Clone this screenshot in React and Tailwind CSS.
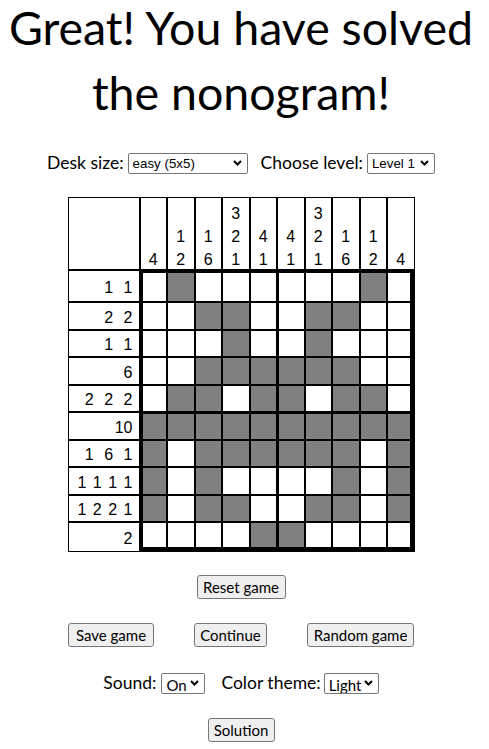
import React, { useState } from 'react';

const colClues = [[4], [1, 2], [1, 6], [3, 2, 1], [4, 1], [4, 1], [3, 2, 1], [1, 6], [1, 2], [4]];
const rowClues = [[1, 1], [2, 2], [1, 1], [6], [2, 2, 2], [10], [1, 6, 1], [1, 1, 1, 1], [1, 2, 2, 1], [2]];
const solved = [
  '0100000010',
  '0011001100',
  '0001001000',
  '0011111100',
  '0110110110',
  '1111111111',
  '1011111101',
  '1010000101',
  '1011001101',
  '0000110000',
];

const font = { fontFamily: 'Lato, "Open Sans", sans-serif' };

// border widths of a game cell: thick frame and a thick cross in the middle
const cellBorder = (r, c) => {
  const left = c === 0 ? 'border-l-[3px]' : c === 5 ? 'border-l-[2px]' : 'border-l-[1px]';
  const right = c === 9 ? 'border-r-[5px]' : 'border-r-[1px]';
  const top = r === 0 ? 'border-t-[3px]' : r === 5 ? 'border-t-[2px]' : 'border-t-[1px]';
  const bottom = r === 9 ? 'border-b-[5px]' : 'border-b-[1px]';
  return `${left} ${right} ${top} ${bottom}`;
};

const Select = ({ value, options, width, small, onChange }) => (
  <span className={`relative inline-flex ${width}`}>
    <select
      value={value}
      onChange={(e) => onChange(e.target.value)}
      className={`appearance-none w-full h-[21px] border border-[#767676] rounded-[2px] bg-white text-black pl-[4px] pr-[16px] outline-none ${
        small ? "text-[13.33px] font-['Liberation_Sans',Arial,sans-serif]" : 'text-[15px]'
      }`}
    >
      {options.map((o) => (
        <option key={o}>{o}</option>
      ))}
    </select>
    <svg
      className="absolute right-[6px] top-[7px] pointer-events-none"
      width="9"
      height="6"
      viewBox="0 0 9 6"
    >
      <polyline points="1,1 4.5,4.5 8,1" fill="none" stroke="#000" strokeWidth="2" />
    </svg>
  </span>
);

const Btn = ({ children, width }) => (
  <button
    className={`h-[24px] ${width} border border-[#767676] rounded-[3px] bg-[#efefef] text-[15px] text-black`}
  >
    {children}
  </button>
);

export default function App() {
  const [size, setSize] = useState('easy (5x5)');
  const [level, setLevel] = useState('Level 1');
  const [sound, setSound] = useState('On');
  const [theme, setTheme] = useState('Light');

  return (
    <div className="w-[482px] bg-white text-black text-center" style={font}>
      <div className="h-[153px]">
        <h1 className="text-[46.5px] font-normal">
          <span className="block leading-[54px]">Great! You have solved</span>
          <span className="block leading-[76px]">the nonogram!</span>
        </h1>
      </div>

      {/* Settings */}
      <div className="h-[21px] flex items-center justify-center text-[17.5px]">
        <span className="mr-[4px]">Desk size:</span>
        <Select
          value={size}
          onChange={setSize}
          width="w-[120px]"
          small
          options={['easy (5x5)', 'medium (10x10)', 'hard (15x15)']}
        />
        <span className="ml-[13px] mr-[4px]">Choose level:</span>
        <Select
          value={level}
          onChange={setLevel}
          width="w-[68px]"
          small
          options={['Level 1', 'Level 2', 'Level 3', 'Level 4', 'Level 5']}
        />
      </div>

      {/* Board */}
      <div className="mt-[23px] flex justify-center">
        <div
          className="grid grid-cols-[72px_repeat(10,27.5px)] grid-rows-[73px_32px_27.5px_27.5px_27.5px_27px_28px_27.5px_27.5px_27.5px_30px] text-[16px]"
          style={{ fontFamily: '"Liberation Sans", Arial, sans-serif' }}
        >
          <div className="border border-black" />
          {colClues.map((clue, i) => (
            <div key={i} className="border border-black flex flex-col justify-end items-center gap-[5px]">
              {clue.map((n, j) => (
                <span key={j} className="leading-[18px]">
                  {n}
                </span>
              ))}
            </div>
          ))}

          {rowClues.map((clue, r) => (
            <React.Fragment key={r}>
              <div
                className={`border border-black flex items-center justify-end pr-[6px] pt-[4px] ${
                  clue.length > 3 ? 'gap-[6.5px]' : 'gap-[10.5px]'
                }`}
              >
                {clue.map((n, j) => (
                  <span key={j} className="leading-[18px]">
                    {n}
                  </span>
                ))}
              </div>
              {solved[r].split('').map((v, c) => (
                <div
                  key={c}
                  className={`border-black ${cellBorder(r, c)} ${v === '1' ? 'bg-[#808080]' : 'bg-white'}`}
                />
              ))}
            </React.Fragment>
          ))}
        </div>
      </div>

      {/* Actions */}
      <div className="mt-[23px] flex justify-center">
        <Btn width="w-[89px]">Reset game</Btn>
      </div>
      <div className="mt-[24px] flex justify-center gap-[40px]">
        <Btn width="w-[86px]">Save game</Btn>
        <Btn width="w-[73px]">Continue</Btn>
        <Btn width="w-[107px]">Random game</Btn>
      </div>

      <div className="mt-[26px] h-[21px] flex items-center justify-center text-[17.5px]">
        <span className="mr-[5px]">Sound:</span>
        <Select value={sound} onChange={setSound} width="w-[44px]" options={['On', 'Off']} />
        <span className="ml-[16px] mr-[3px]">Color theme:</span>
        <Select value={theme} onChange={setTheme} width="w-[55px]" options={['Light', 'Dark']} />
      </div>

      <div className="mt-[24px] pb-[6px] flex justify-center">
        <Btn width="w-[67px]">Solution</Btn>
      </div>
    </div>
  );
}
